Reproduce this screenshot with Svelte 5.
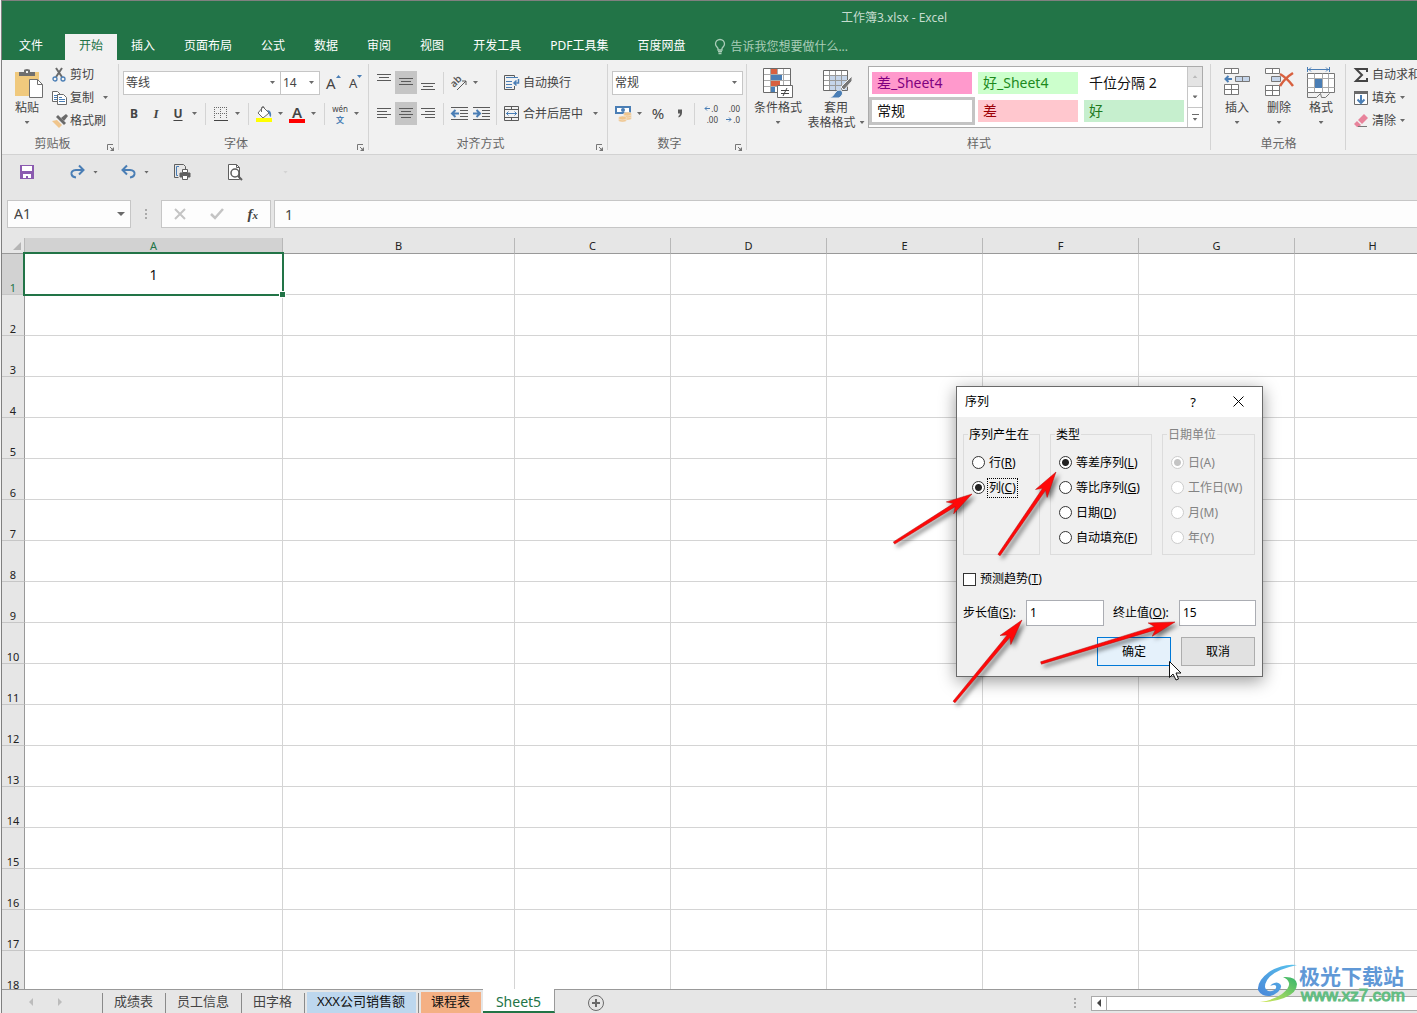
<script>
  const tabs = ['插入', '页面布局', '公式', '数据', '审阅', '视图', '开发工具', 'PDF工具集', '百度网盘'];
  const columns = ['A', 'B', 'C', 'D', 'E', 'F', 'G', 'H'];
  const rows = Array.from({ length: 18 }, (_, i) => i + 1);
  const types = [['等差序列', 'L'], ['等比序列', 'G'], ['日期', 'D'], ['自动填充', 'F']];
  const units = [['日', 'A'], ['工作日', 'W'], ['月', 'M'], ['年', 'Y']];
  const arrows = [
    [894, 543, 972, 494],
    [999, 555, 1056, 472],
    [954, 702, 1022, 620],
    [1041, 663, 1175, 622]
  ];

  function arrowPath([x1, y1, x2, y2]) {
    const len = Math.hypot(x2 - x1, y2 - y1);
    const ux = (x2 - x1) / len;
    const uy = (y2 - y1) / len;
    const at = (d, w) => `${(x2 - ux * d - uy * w).toFixed(1)} ${(y2 - uy * d + ux * w).toFixed(1)}`;
    return `M${at(len, 1.3)}L${at(21, 1.8)}L${at(26, 7)}L${at(0, 0)}L${at(26, -7)}L${at(21, -1.8)}L${at(len, -1.3)}Z`;
  }
</script>

{#snippet lines(rowsData)}
  <svg width="16" height="23" viewBox="0 0 16 23" shape-rendering="crispEdges" aria-hidden="true">
    {#each rowsData as [x, y, w]}<rect {x} {y} width={w} height="1" fill="#5a5a5a" />{/each}
  </svg>
{/snippet}

{#snippet launcher()}
  <button class="launcher" aria-label="更多设置">
    <svg width="8" height="8" viewBox="0 0 8 8" aria-hidden="true">
      <path d="M.5 6V.5H6" fill="none" stroke="#777" /><path d="M3 3l3 3" stroke="#777" /><path d="M7 3v4H3z" fill="#777" />
    </svg>
  </button>
{/snippet}

<main class="app">
  <header class="top">
    <div class="title">工作簿3.xlsx - Excel</div>
    <nav class="tabs">
      <button class="tab file">文件</button>
      <button class="tab active">开始</button>
      {#each tabs as t}<button class="tab">{t}</button>{/each}
      <button class="tell">
        <svg width="12" height="16" viewBox="0 0 12 16" fill="none" stroke="#a9cdb8" aria-hidden="true">
          <path d="M4 11V9.500C3.500 8 1.500 7.500 1.500 5a4.500 4.500 0 0 1 9 0C10.500 7.500 8.500 8 8 9.500V11z" stroke-width="1.300" />
          <path d="M4 12.500h4M4.500 14.500h3" stroke-width="1.300" />
        </svg>
        告诉我您想要做什么...
      </button>
    </nav>
  </header>

  <section class="ribbon">
    <div class="group clip">
      <div class="body">
        <button class="big paste">
          <svg width="30" height="32" viewBox="0 0 30 32" aria-hidden="true">
            <path d="M1 4h24v24H1z" fill="#f0c97d" />
            <path d="M5 8V4h5V2.500Q10 1 13 1t3 1.500V4h5v4z" fill="#6f6f6f" /><rect x="12" y="3" width="2" height="2" fill="#f0f0f0" />
            <path d="M15.500 11.500h8l5 5v13h-13z" fill="#fff" stroke="#6f6f6f" /><path d="M23.500 11.500v5h5" fill="none" stroke="#6f6f6f" />
          </svg>
          <span>粘贴</span><i class="caret"></i>
        </button>
        <div class="stack">
          <button class="item">
            <svg width="16" height="16" viewBox="0 0 16 16" fill="none" aria-hidden="true">
              <path d="M4 1l6 9M10 1L4 10" stroke="#6a6a6a" stroke-width="2" />
              <circle cx="3" cy="12" r="2" stroke="#4a7eb5" stroke-width="1.300" /><circle cx="11" cy="12" r="2" stroke="#4a7eb5" stroke-width="1.300" />
            </svg>剪切
          </button>
          <button class="item">
            <svg width="16" height="16" viewBox="0 0 16 16" fill="#fff" stroke="#6a6a6a" aria-hidden="true">
              <path d="M.5 1.500h5l3 3v7h-8z" /><path d="M2 5.500h3M2 7.500h3M2 9.500h3" stroke="#4a7eb5" />
              <path d="M5.500 4.500h6l3 3v7h-9z" /><path d="M7 9.500h6M7 11.500h6M7 7.500h3" stroke="#4a7eb5" />
            </svg>复制<i class="caret"></i>
          </button>
          <button class="item">
            <svg width="16" height="16" viewBox="0 0 16 16" aria-hidden="true">
              <path d="M0 8l5-1 5 5-3 3z" fill="#f0c58c" /><path d="M4 4l2-2 8 8-2 2z" fill="#6a6a6a" /><path d="M9 5l5-4 2 2-4 5z" fill="#6a6a6a" />
            </svg>格式刷
          </button>
        </div>
      </div>
      <footer>剪贴板{@render launcher()}</footer>
    </div>

    <div class="group font">
      <div class="body rows">
        <div class="row">
          <span class="combo name"><select aria-label="字体"><option>等线</option></select><i class="caret"></i></span>
          <span class="combo size"><select aria-label="字号"><option>14</option></select><i class="caret"></i></span>
          <button class="grow" aria-label="增大字号">
            <span class="letter">A</span><svg width="5" height="3" viewBox="0 0 5 3" aria-hidden="true"><path d="M0 3h5L2.500 0z" fill="#4a7eb5" /></svg>
          </button>
          <button class="grow small" aria-label="减小字号">
            <span class="letter">A</span><svg width="5" height="3" viewBox="0 0 5 3" aria-hidden="true"><path d="M0 0h5L2.500 3z" fill="#4a7eb5" /></svg>
          </button>
        </div>
        <div class="row">
          <button class="tool bold">B</button>
          <button class="tool italic">I</button>
          <button class="tool under">U</button>
          <button class="drop" aria-label="下划线选项"><i class="caret"></i></button>
          <i class="vs"></i>
          <button class="tool" aria-label="边框">
            <svg width="14" height="14" viewBox="0 0 14 14" fill="none" stroke="#6a6a6a" shape-rendering="crispEdges" aria-hidden="true">
              <path d="M0 .5h14M0 6.500h14M.5 0v12M6.500 0v12M12.500 0v12" stroke-dasharray="1 1" /><path d="M0 13h14" stroke="#444" />
            </svg>
          </button>
          <button class="drop" aria-label="边框选项"><i class="caret"></i></button>
          <i class="vs"></i>
          <button class="tool" aria-label="填充颜色">
            <svg width="18" height="16" viewBox="0 0 18 16" aria-hidden="true">
              <path d="M8 1l6 6-6 5-5-5z" fill="#fff" stroke="#6a6a6a" /><path d="M6.500 6V1.500Q8 -.5 9.500 1.500" fill="none" stroke="#6a6a6a" />
              <path d="M12 4q5 0 4 7-2-1-2-4z" fill="#4a7eb5" /><path d="M1 12h16v4H1z" fill="#ff0" />
            </svg>
          </button>
          <button class="drop" aria-label="填充颜色选项"><i class="caret"></i></button>
          <button class="tool fontcolor" aria-label="字体颜色"><span>A</span></button>
          <button class="drop" aria-label="字体颜色选项"><i class="caret"></i></button>
          <i class="vs"></i>
          <button class="tool pinyin"><span>wén</span><b>文</b></button>
          <button class="drop" aria-label="拼音选项"><i class="caret"></i></button>
        </div>
      </div>
      <footer>字体{@render launcher()}</footer>
    </div>

    <div class="group align">
      <div class="body">
        <div class="rows">
          <div class="row">
            <button class="tool" aria-label="顶端对齐">{@render lines([[1, 3, 14], [3, 6, 10], [1, 9, 14]])}</button>
            <button class="tool on" aria-label="垂直居中">{@render lines([[1, 7, 14], [3, 10, 10], [1, 13, 14]])}</button>
            <button class="tool" aria-label="底端对齐">{@render lines([[1, 12, 14], [3, 15, 10], [1, 18, 14]])}</button>
            <i class="vs"></i>
            <button class="tool" aria-label="方向">
              <svg width="18" height="18" viewBox="0 0 18 18" aria-hidden="true">
                <text x="1" y="11" transform="rotate(-45 6 9)" font-size="10" font-weight="600" fill="#5a5a5a">ab</text>
                <path d="M7 16L16 7M16 11V7h-4" fill="none" stroke="#5a5a5a" />
              </svg>
            </button>
            <button class="drop" aria-label="方向选项"><i class="caret"></i></button>
          </div>
          <div class="row">
            <button class="tool" aria-label="左对齐">{@render lines([[1, 6, 14], [1, 9, 10], [1, 12, 14], [1, 15, 10]])}</button>
            <button class="tool on" aria-label="居中">{@render lines([[1, 6, 14], [3, 9, 10], [1, 12, 14], [3, 15, 10]])}</button>
            <button class="tool" aria-label="右对齐">{@render lines([[1, 6, 14], [5, 9, 10], [1, 12, 14], [5, 15, 10]])}</button>
            <i class="vs"></i>
            <button class="tool" aria-label="减少缩进">
              <svg width="17" height="13" viewBox="0 0 17 13" aria-hidden="true"><path d="M0 .5h17M9 3.500h8M9 6.500h8M9 9.500h8M0 12.500h17" stroke="#5a5a5a" /><path d="M1 6.500h7M4.500 3L1 6.500 4.500 10" fill="none" stroke="#4a7eb5" stroke-width="2" /></svg>
            </button>
            <button class="tool" aria-label="增加缩进">
              <svg width="17" height="13" viewBox="0 0 17 13" aria-hidden="true"><path d="M0 .5h17M9 3.500h8M9 6.500h8M9 9.500h8M0 12.500h17" stroke="#5a5a5a" /><path d="M0 6.500h7M3.500 3L7 6.500 3.500 10" fill="none" stroke="#4a7eb5" stroke-width="2" /></svg>
            </button>
          </div>
        </div>
        <i class="vs tall"></i>
        <div class="rows">
          <button class="row wide">
            <svg width="16" height="15" viewBox="0 0 16 15" fill="none" stroke="#5a5a5a" aria-hidden="true">
              <path d="M.5 .5h10v2M10.500 11v3.500H.5V.5" /><path d="M2 2.500h12M2 6.500h6M2 9.500h6M2 12.500h6" stroke="#4a7eb5" /><path d="M14.500 4v4H10M12.500 5.500L10 8l2.500 2.500" stroke="#4a7eb5" stroke-width="1.500" />
            </svg>自动换行
          </button>
          <button class="row wide">
            <svg width="16" height="15" viewBox="0 0 16 15" fill="none" stroke="#5a5a5a" aria-hidden="true">
              <path d="M.5 .5h14v14H.5zM.5 3.500h14M.5 11.500h14M7.500 .5v3M7.500 11.500v3" /><path d="M2 7.500h11M4.500 5.500l-2 2 2 2M10.500 5.500l2 2-2 2" stroke="#4a7eb5" />
            </svg>合并后居中<i class="caret"></i>
          </button>
        </div>
      </div>
      <footer>对齐方式{@render launcher()}</footer>
    </div>

    <div class="group number">
      <div class="body rows">
        <div class="row"><span class="combo format"><select aria-label="数字格式"><option>常规</option></select><i class="caret"></i></span></div>
        <div class="row">
          <button class="tool" aria-label="会计数字格式">
            <svg width="18" height="16" viewBox="0 0 18 16" aria-hidden="true">
              <path d="M1 0h16v8H1z" fill="#4a7eb5" /><path d="M3 2h12v4H3z" fill="#fff" /><circle cx="9" cy="4" r="2" fill="#4a7eb5" />
              <g fill="#f0c58c" stroke="#f0f0f0" stroke-width=".5"><ellipse cx="13.500" cy="12" rx="4" ry="2" /><ellipse cx="13.500" cy="10" rx="4" ry="2" /><ellipse cx="13.500" cy="8" rx="4" ry="2" /><ellipse cx="8.500" cy="14" rx="4" ry="2" /><ellipse cx="8.500" cy="12" rx="4" ry="2" /></g>
            </svg>
          </button>
          <button class="drop" aria-label="会计格式选项"><i class="caret"></i></button>
          <button class="tool percent">%</button>
          <button class="tool comma" aria-label="千位分隔样式"><svg width="6" height="9" viewBox="0 0 6 9" aria-hidden="true"><path d="M1 .5h4v3Q5 7 1.500 8.500V7Q3 6 3 4.500H1z" fill="#5a5a5a" /></svg></button>
          <i class="vs"></i>
          <button class="tool dec" aria-label="增加小数位数">
            <span><svg width="6" height="5" viewBox="0 0 6 5" aria-hidden="true"><path d="M6 2.500H1M3 .5l-2 2 2 2" fill="none" stroke="#4a7eb5" /></svg>.0</span><span>.00</span>
          </button>
          <button class="tool dec" aria-label="减少小数位数">
            <span>.00</span><span><svg width="6" height="5" viewBox="0 0 6 5" aria-hidden="true"><path d="M0 2.500h5M3 .5l2 2-2 2" fill="none" stroke="#4a7eb5" /></svg>.0</span>
          </button>
        </div>
      </div>
      <footer>数字{@render launcher()}</footer>
    </div>

    <div class="group styles">
      <div class="body">
        <button class="big">
          <svg width="30" height="32" viewBox="0 0 30 32" aria-hidden="true">
            <path d="M.5 .5h27v24H.5z" fill="#fff" /><path d="M8 1h6v6H8zM8 13h9v6H8z" fill="#d8603f" /><path d="M8 7h11v6H8zM8 19h4v6H8z" fill="#4a7eb5" />
            <path d="M.5 6.500h27M.5 12.500h27M.5 18.500h27M7.500 1v24M14.500 1v6M20.500 1v24" stroke="#aaa" /><path d="M.5 .5h27v24H.5z" fill="none" stroke="#6a6a6a" />
            <path d="M14.500 17.500h15v12h-15z" fill="#fff" stroke="#6a6a6a" /><path d="M18 22.500h8M18 25.500h8M24 20l-4 8" stroke="#444" />
          </svg>
          <span>条件格式</span><i class="caret"></i>
        </button>
        <button class="big">
          <svg width="30" height="32" viewBox="0 0 30 32" aria-hidden="true">
            <path d="M.5 2.500h24v20H.5z" fill="#fff" /><path d="M7 7h17v15H7z" fill="#c5d5ea" />
            <path d="M.5 7.500h24M.5 12.500h24M.5 17.500h24M6.500 2v20M12.500 2v20M18.500 2v20" stroke="#999" /><path d="M.5 2.500h24v20H.5z" fill="none" stroke="#6a6a6a" />
            <path d="M18 19L29 8v5l-8 9z" fill="#777" stroke="#f0f0f0" /><path d="M6 30q4-1 6-5t6-3q4 4-2 8z" fill="#4a7eb5" stroke="#f0f0f0" />
          </svg>
          <span>套用</span><span class="inline">表格格式<i class="caret"></i></span>
        </button>
        <div class="gallery">
          <div class="swatches">
            <button class="sw pink">差_Sheet4</button><button class="sw lime">好_Sheet4</button><button class="sw">千位分隔 2</button>
            <button class="sw chosen">常规</button><button class="sw rose">差</button><button class="sw mint">好</button>
          </div>
          <div class="scroller">
            <button disabled aria-label="上一行"><i class="caret up"></i></button>
            <button aria-label="下一行"><i class="caret"></i></button>
            <button class="more" aria-label="全部样式"><i class="caret"></i></button>
          </div>
        </div>
      </div>
      <footer>样式</footer>
    </div>

    <div class="group cells">
      <div class="body">
        <button class="big">
          <svg width="28" height="32" viewBox="0 0 28 32" fill="#fff" stroke="#777" aria-hidden="true">
            <path d="M1.500 1.500h14v5h-14zM8.500 1.500v5M1.500 17.500h14v10h-14zM8.500 17.500v10M1.500 22.500h14" /><path d="M12.500 9.500h14v5h-14zM19.500 9.500v5" fill="#c5d5ea" /><path d="M9 12H3M5.500 9L2.500 12l3 3" fill="none" stroke="#4a7eb5" stroke-width="2" />
          </svg>
          <span>插入</span><i class="caret"></i>
        </button>
        <button class="big">
          <svg width="30" height="32" viewBox="0 0 30 32" fill="#fff" stroke="#777" aria-hidden="true">
            <path d="M1.500 1.500h14v5h-14zM8.500 1.500v5M1.500 18.500h14v10h-14zM8.500 18.500v10M1.500 23.500h14" /><path d="M7.500 9.500h9v5h-9z" fill="#c5d5ea" /><path d="M16 7q7 4 13 12M29 6q-8 5-13 13" fill="none" stroke="#d8603f" stroke-width="2.500" />
          </svg>
          <span>删除</span><i class="caret"></i>
        </button>
        <button class="big">
          <svg width="28" height="32" viewBox="0 0 28 32" fill="#fff" stroke="#777" aria-hidden="true">
            <path d="M.5 6.500h27v19H.5z" /><path d="M.5 11.500h27M.5 20.500h27M7.500 6.500v19M15.500 6.500v19M21.500 6.500v19" stroke="#aaa" /><path d="M8 12h7v9H8z" fill="#4a7eb5" stroke="none" />
            <path d="M.5 25.500v5h9l4-4 1 4h4l4-4" fill="none" /><path d="M.5 0v5M22.500 0v5M1 2.500h21M4 .5l-2 2 2 2M19 .5l2 2-2 2" fill="none" stroke="#4a7eb5" />
          </svg>
          <span>格式</span><i class="caret"></i>
        </button>
      </div>
      <footer>单元格</footer>
    </div>

    <div class="group edit">
      <div class="body">
        <div class="stack">
          <button class="item"><svg width="16" height="16" viewBox="0 0 16 16" fill="none" stroke="#444" stroke-width="2" aria-hidden="true"><path d="M14 5V2H3l6 6-6 6h11v-3" /></svg>自动求和</button>
          <button class="item"><svg width="16" height="16" viewBox="0 0 16 16" fill="#fff" stroke="#6a6a6a" aria-hidden="true"><path d="M1.500 1.500h13v13h-13z" /><path d="M1 1h14v3H1z" fill="#6a6a6a" stroke="none" /><path d="M8 5v8M4.500 9.500L8 13l3.500-3.500" fill="none" stroke="#4a7eb5" stroke-width="2" /></svg>填充<i class="caret"></i></button>
          <button class="item"><svg width="16" height="16" viewBox="0 0 16 16" aria-hidden="true"><path d="M5 7l6-6 4 4-6 6z" fill="#e8839b" /><path d="M4 8L1 11l3 3h2l2-2z" fill="#e8839b" /><path d="M5 13.500h9" stroke="#777" /></svg>清除<i class="caret"></i></button>
        </div>
      </div>
    </div>
  </section>

  <section class="quick">
    <button class="q" aria-label="保存"><svg width="14" height="14" viewBox="0 0 14 14" aria-hidden="true"><path d="M0 0h14v14H0z" fill="#8b5bb0" /><path d="M2 1h10v5H2zM3 9h8v4H8v-2H6v2H3z" fill="#fff" /></svg></button>
    <button class="q" aria-label="恢复"><svg width="15" height="14" viewBox="0 0 15 14" fill="none" stroke="#4a7eb5" stroke-width="2" aria-hidden="true"><path d="M13 5H6Q1 5.500 1.500 9 2 12 6 12.500M9 .5L13.500 5 9 9.500" /></svg><i class="caret"></i></button>
    <button class="q" aria-label="撤消"><svg width="15" height="14" viewBox="0 0 15 14" fill="none" stroke="#4a7eb5" stroke-width="2" aria-hidden="true"><path d="M2 5h7q5 .5 4.500 4-.5 3-4.500 3.500M6 .5L1.500 5 6 9.500" /></svg><i class="caret"></i></button>
    <button class="q" aria-label="打印预览和打印"><svg width="17" height="17" viewBox="0 0 17 17" fill="#fff" stroke="#5f5f5f" aria-hidden="true"><path d="M.5 13.500V.5h9l2 2v4M.5 13.500h4" fill="none" /><path d="M5 2.500H2.500v9H4" fill="none" stroke="#4a7eb5" /><path d="M8.500 5.500h5v3h-5z" /><path d="M6 9h10v4H6z" fill="#5f5f5f" /><path d="M8.500 11.500h5v4h-5z" /></svg></button>
    <button class="q" aria-label="打印预览"><svg width="15" height="17" viewBox="0 0 15 17" fill="#fff" stroke="#5f5f5f" aria-hidden="true"><path d="M.5 .5h8l3 3v12H.5z" /><path d="M8.500 .5v3h3" fill="none" /><circle cx="7" cy="9" r="4" stroke-width="1.500" /><path d="M10 12l4 4" stroke-width="2" /></svg></button>
    <button class="q faint" aria-label="自定义快速访问工具栏"><i class="caret"></i></button>
  </section>

  <section class="formula">
    <div class="namebox"><input aria-label="名称框" value="A1" /><i class="caret"></i></div>
    <svg class="dots" width="2" height="10" viewBox="0 0 2 10" aria-hidden="true"><path d="M0 0h2v2H0zM0 4h2v2H0zM0 8h2v2H0z" fill="#aaa" /></svg>
    <div class="fxbox">
      <button aria-label="取消输入"><svg width="12" height="12" viewBox="0 0 12 12" stroke="#c4c4c4" stroke-width="2" aria-hidden="true"><path d="M1 1l10 10M11 1L1 11" /></svg></button>
      <button aria-label="输入"><svg width="14" height="12" viewBox="0 0 14 12" fill="none" stroke="#c4c4c4" stroke-width="2.500" aria-hidden="true"><path d="M1 6l4 4 8-9" /></svg></button>
      <button class="fx">f<small>x</small></button>
    </div>
    <input class="fbar" aria-label="编辑栏" value="1" />
  </section>

  <section class="sheet">
    <table>
      <colgroup><col class="c0" /><col class="ca" /><col class="cb" />{#each columns.slice(2) as c}<col class="cn" />{/each}</colgroup>
      <thead>
        <tr>
          <th class="corner"><svg width="8" height="8" viewBox="0 0 8 8" aria-hidden="true"><path d="M8 0v8H0z" fill="#b5b5b5" /></svg></th>
          {#each columns as c, i}<th class:hot={i === 0} scope="col">{c}</th>{/each}
        </tr>
      </thead>
      <tbody>
        {#each rows as r}
          <tr>
            <th class:hot={r === 1} scope="row">{r}</th>
            {#each columns as c, i}<td class:sel={r === 1 && i === 0}>{r === 1 && i === 0 ? '1' : ''}</td>{/each}
          </tr>
        {/each}
      </tbody>
    </table>
  </section>

  <footer class="sheets">
    <div class="movers">
      <button aria-label="上一张"><svg width="4" height="8" viewBox="0 0 4 8" aria-hidden="true"><path d="M4 0v8L0 4z" fill="#bcbcbc" /></svg></button>
      <button aria-label="下一张"><svg width="4" height="8" viewBox="0 0 4 8" aria-hidden="true"><path d="M0 0v8l4-4z" fill="#bcbcbc" /></svg></button>
    </div>
    <button class="st">成绩表</button>
    <button class="st">员工信息</button>
    <button class="st">田字格</button>
    <button class="st fill blue"><span>XXX公司销售额</span></button>
    <button class="st fill orange"><span>课程表</span></button>
    <button class="st current">Sheet5</button>
    <button class="plus" aria-label="新工作表"><svg width="16" height="16" viewBox="0 0 16 16" fill="none" stroke="#6a6a6a" aria-hidden="true"><circle cx="8" cy="8" r="7.500" /><path d="M8 4v8M4 8h8" stroke-width="2" /></svg></button>
    <div class="hscroll">
      <svg width="2" height="10" viewBox="0 0 2 10" aria-hidden="true"><path d="M0 0h2v2H0zM0 4h2v2H0zM0 8h2v2H0z" fill="#aaa" /></svg>
      <button aria-label="向左滚动"><svg width="4" height="8" viewBox="0 0 4 8" aria-hidden="true"><path d="M4 0v8L0 4z" fill="#444" /></svg></button>
      <div class="track"></div>
    </div>
  </footer>

  <form class="dialog" aria-label="序列" onsubmit={(e) => e.preventDefault()}>
    <header>
      <span>序列</span>
      <button type="button" class="help">?</button>
      <button type="button" aria-label="关闭"><svg width="11" height="11" viewBox="0 0 11 11" stroke="#000" aria-hidden="true"><path d="M.5 .5l10 10M10.500 .5l-10 10" /></svg></button>
    </header>
    <div class="content">
      <div class="boxes">
        <fieldset>
          <legend>序列产生在</legend>
          <label><input type="radio" name="dir" /><span>行(<u>R</u>)</span></label>
          <label><input type="radio" name="dir" checked /><span class="focus">列(<u>C</u>)</span></label>
        </fieldset>
        <fieldset>
          <legend>类型</legend>
          {#each types as [t, k], i}<label><input type="radio" name="type" checked={i === 0} /><span>{t}(<u>{k}</u>)</span></label>{/each}
        </fieldset>
        <fieldset disabled>
          <legend>日期单位</legend>
          {#each units as [t, k], i}<label><input type="radio" name="unit" checked={i === 0} /><span>{t}({k})</span></label>{/each}
        </fieldset>
      </div>
      <label class="trend"><input type="checkbox" /><span>预测趋势(<u>T</u>)</span></label>
      <div class="values">
        <label for="step">步长值(<u>S</u>):</label><input id="step" value="1" />
        <label for="stop">终止值(<u>O</u>):</label><input id="stop" value="15" />
      </div>
      <div class="actions"><button class="ok">确定</button><button type="button">取消</button></div>
    </div>
  </form>

  <svg class="overlay" aria-hidden="true">
    <g class="arrows">{#each arrows as a}<path d={arrowPath(a)} fill="#ff0808" stroke="#b01010" stroke-width=".5" />{/each}</g>
    <path d="M1169.500 661.500v16l3.500-3.500 3 6 2.500-1-2.500-6h5z" fill="#fff" stroke="#111" />
  </svg>

  <div class="brand">
    <svg width="42" height="42" viewBox="0 0 42 42" aria-hidden="true">
      <defs>
        <linearGradient id="sky" x1="0" y1="1" x2="1" y2="0"><stop offset="0" stop-color="#4a86d8" /><stop offset="1" stop-color="#58c4ee" /></linearGradient>
        <linearGradient id="leaf" x1="0" y1="1" x2="1" y2="0"><stop offset="0" stop-color="#d6e95b" /><stop offset="1" stop-color="#35b56d" /></linearGradient>
      </defs>
      <path d="M40 2Q26 0 12 9 0 18 1 27q2 4 5 5 8 3 15-3 5-5 2-8-3-3-8 0l-2 2q5-2 6 0 1 3-4 5-6 1-7-4Q8 9 40 2z" fill="url(#sky)" />
      <path d="M26 14q13-1 14 7 0 9-13 14-10 4-24 4 14-2 22-8 8-6 7-11-1-4-6-6z" fill="url(#leaf)" />
    </svg>
    <div><strong>极光下载站</strong><span>www.xz7.com</span></div>
  </div>
</main>

<style>
  :global(body) { background: #f4f4f4; }
  .app { position: relative; display: flex; flex-direction: column; height: 100vh; margin-left: 1px; border-left: 1px solid #808080; box-sizing: border-box; overflow: hidden; background: #e6e6e6; color: #444; font: 12px/16px "Noto Sans", "Noto Sans CJK SC", sans-serif; }
  .app *, .app *::after { box-sizing: border-box; }
  button { border: 0; padding: 0; background: none; color: inherit; font: inherit; white-space: nowrap; }
  input, select { font: inherit; color: inherit; border-radius: 0; }
  svg { display: block; flex: none; overflow: visible; }
  i.caret { flex: none; width: 5px; height: 3px; background: #6a6a6a; clip-path: polygon(0 0, 100% 0, 50% 100%); }
  i.caret.up { clip-path: polygon(0 100%, 100% 100%, 50% 0); background: #bbb; }

  .top { flex: none; background: #227447; border-top: 1px solid #808080; color: #fff; }
  .title { height: 33px; line-height: 33px; padding-left: 369px; text-align: center; color: #c5dccf; }
  .tabs { display: flex; gap: 1px; height: 26px; }
  .tab { padding: 0 14px 2px; }
  .tab.file { padding: 0 21px 2px 17px; }
  .tab.active { margin-right: -1px; background: #f1f1f1; color: #227447; }
  .tell { display: flex; align-items: center; gap: 4px; margin-left: 14px; color: #a9cdb8; }

  .ribbon { flex: none; display: flex; height: 95px; background: #f1f1f1; border-bottom: 1px solid #d2d2d2; overflow: hidden; }
  .group { position: relative; flex: none; display: flex; flex-direction: column; }
  .group::after { content: ""; position: absolute; right: 0; top: 4px; bottom: 4px; width: 1px; background: #d4d4d4; }
  .body { flex: 1; display: flex; }
  .group > footer { display: flex; justify-content: center; position: relative; height: 18px; padding-right: 16px; color: #666; }
  .launcher { position: absolute; right: 4px; bottom: 2px; }
  .clip { width: 117px; }
  .font { width: 250px; }
  .align { width: 239px; }
  .number { width: 139px; }
  .styles { width: 464px; }
  .cells { width: 135px; }
  .styles > footer, .cells > footer { padding-right: 0; }
  .big { display: flex; flex-direction: column; align-items: center; padding-top: 8px; }
  .big span { line-height: 15px; }
  .big > .caret { margin-top: 6px; }
  .inline { display: flex; align-items: center; gap: 4px; }
  .paste { width: 50px; }
  .paste svg { margin-left: 4px; }
  .stack { display: flex; flex-direction: column; padding-top: 3px; }
  .item { display: flex; align-items: center; gap: 2px; height: 23px; }
  .item .caret { margin-left: 7px; }
  .edit .item { gap: 3px; }
  .edit .item .caret { margin-left: 1px; }
  .edit .body { padding-left: 7px; }
  .rows { display: flex; flex-direction: column; gap: 8px; padding-top: 11px; }
  .row { display: flex; align-items: center; height: 23px; }
  .font .rows, .number .rows { padding-left: 4px; }
  .font .body, .number .body { padding-left: 4px; }
  .align .body { padding-left: 4px; }
  .combo { display: flex; align-items: center; height: 24px; border: 1px solid #c6c6c6; background: #fff; padding-right: 5px; }
  .combo select { flex: 1; min-width: 0; height: 100%; border: 0; padding: 0 0 0 2px; background: none; appearance: none; }
  .combo.name { width: 158px; }
  .combo.size { width: 40px; margin-left: -1px; }
  .combo.format { width: 131px; }
  .grow { display: flex; width: 17px; margin-left: 6px; }
  .grow .letter { font-size: 15px; }
  .grow.small .letter { font-size: 13px; }
  .tool { display: flex; align-items: center; justify-content: center; width: 22px; height: 23px; }
  .tool.on { background: #c5c5c5; }
  .bold { font-weight: 700; }
  .italic { font: italic 700 13px "Liberation Serif", serif; }
  .under { font-weight: 700; text-decoration: underline; text-underline-offset: 2px; }
  .drop { display: flex; justify-content: center; align-items: center; width: 11px; height: 23px; }
  .vs { flex: none; width: 1px; height: 22px; margin: 0 4px; background: #d4d4d4; }
  .font .vs { margin: 0 4px 0 5px; }
  .vs.tall { height: 55px; margin: 10px 7px 0 0; }
  .fontcolor span { width: 16px; height: 19px; border-bottom: 4px solid #f00; font-weight: 600; font-size: 15px; line-height: 16px; }
  .pinyin { flex-direction: column; font-size: 8px; line-height: 11px; }
  .pinyin b { color: #4a7eb5; line-height: 11px; }
  .align .rows:first-child { width: 123px; }
  .wide { gap: 3px; }
  .wide .caret { margin-left: 7px; }
  .percent { font-size: 15px; padding-bottom: 2px; margin-left: 2px; }
  .comma { margin-right: -1px; padding-bottom: 1px; }
  .dec { flex-direction: column; align-items: flex-end; padding: 0 3px 0 0; font-size: 8px; line-height: 11px; }
  .dec span { display: flex; align-items: center; gap: 1px; }
  .styles .big { width: 62px; }
  .styles .big:nth-child(2) { width: 54px; }
  .styles .big:nth-child(2) svg { margin-left: 4px; }
  .gallery { display: flex; width: 335px; height: 62px; margin: 6px 0 0 5px; border: 1px solid #ababab; background: #fff; }
  .swatches { flex: 1; display: grid; grid-template-columns: repeat(3, 100px); grid-auto-rows: 22px; gap: 6px; padding: 5px 0 0 3px; }
  .sw { padding-left: 5px; text-align: left; font-size: 14px; line-height: 22px; color: #111; }
  .pink { background: #ff99cc; color: #800080; }
  .lime { background: #ccffcc; color: #1c8a1c; }
  .rose { background: #ffc7ce; color: #9c0006; }
  .mint { background: #c6efce; color: #1e7a1e; }
  .chosen { outline: 3px solid #c4c4c4; }
  .scroller { width: 15px; display: flex; flex-direction: column; border-left: 1px solid #c6c6c6; }
  .scroller button { flex: 1; display: flex; flex-direction: column; gap: 3px; align-items: center; justify-content: center; border-bottom: 1px solid #c6c6c6; }
  .scroller button:last-child { border: 0; }
  .scroller button:disabled { background: #e4e4e4; }
  .more::before { content: ""; width: 7px; height: 1px; background: #6a6a6a; }
  .cells .body { padding-left: 5px; }
  .cells .big { width: 42px; }
  .cells .big svg { margin-top: -1px; margin-bottom: 1px; }

  .quick { flex: none; display: flex; align-items: center; height: 34px; padding-left: 18px; margin-bottom: 1px; }
  .q { display: flex; align-items: center; gap: 8px; margin-right: 23px; height: 20px; }
  .q:first-child { margin-right: 36px; }
  .q:nth-child(4) { margin-right: 37px; margin-left: 2px; }
  .q:nth-child(5) { margin-right: 40px; }
  .faint { opacity: .15; }
  .formula { flex: none; display: flex; align-items: center; margin: 10px 0; padding-left: 5px; height: 28px; font-size: 14px; }
  .namebox, .fxbox, .fbar { display: flex; align-items: center; height: 28px; border: 1px solid #c6c6c6; background: #fdfdfd; }
  .namebox { width: 124px; padding-right: 5px; }
  .namebox input { flex: 1; min-width: 0; border: 0; padding: 0 6px; background: none; }
  .namebox .caret { width: 8px; height: 4px; }
  .dots { margin: 0 14px; }
  .fxbox { width: 110px; justify-content: space-around; }
  .fx { font: italic 700 15px "Liberation Serif", serif; }
  .fx small { font-size: 11px; }
  .fbar { flex: 1; min-width: 0; margin-left: 3px; border-right: 0; padding: 0 10px; }

  .sheet { flex: 1; min-height: 0; overflow: hidden; }
  table { table-layout: fixed; width: 1449px; border-collapse: separate; border-spacing: 0; background: #fff; }
  .c0 { width: 23px; }
  .ca { width: 258px; }
  .cb { width: 232px; }
  .cn { width: 156px; }
  th { padding: 0; font-weight: 400; font-size: 11px; line-height: 13px; color: #222; background: #e6e6e6; }
  thead th { height: 16px; border-right: 1px solid #b8b8b8; border-bottom: 1px solid #999; }
  .corner svg { margin-left: 11px; }
  tbody th { height: 41px; border-right: 1px solid #999; border-bottom: 1px solid #c6c6c6; vertical-align: bottom; }
  th.hot { background: #d2d2d2; color: #227447; }
  td { padding: 2px 0 0; border-right: 1px solid #d4d4d4; border-bottom: 1px solid #d4d4d4; text-align: center; color: #111; font-size: 14px; }
  td.sel { position: relative; z-index: 1; }
  td.sel::before { content: ""; position: absolute; inset: -2px; border: 2px solid #227447; box-sizing: border-box; }
  td.sel::after { content: ""; position: absolute; right: -4px; bottom: -4px; width: 7px; height: 7px; border: 1px solid #fff; background: #227447; }

  .sheets { flex: none; display: flex; height: 24px; border-top: 1px solid #999; font-size: 13px; line-height: 22px; }
  .movers { display: flex; align-items: center; gap: 25px; width: 100px; padding-left: 27px; }
  .st { position: relative; padding: 0 12px 1px; }
  .st:not(.current)::before { content: ""; position: absolute; left: 0; top: 3px; bottom: 0; width: 1px; background: #8a8a8a; }
  .fill { padding: 2px 2px 0 3px; color: #111; }
  .fill span { display: block; padding: 0 11px 0 10px; line-height: 19px; height: 21px; }
  .blue span { background: #bdd7ee; }
  .orange span { background: #f4b084; }
  .current { margin: -1px 0 0; padding: 2px 13px 0; background: #fff; color: #227447; font-size: 14px; border-right: 1px solid #999; border-bottom: 2px solid #227447; }
  .plus { margin-left: 33px; padding-top: 3px; }
  .hscroll { flex: none; display: flex; align-items: center; width: 343px; margin-left: auto; padding-top: 3px; }
  .hscroll button { display: flex; align-items: center; justify-content: center; width: 16px; height: 15px; margin-left: 15px; border: 1px solid #aaa; background: #fff; }
  .track { flex: 1; height: 15px; border: solid #aaa; border-width: 1px 0; background: #fff; }

  .dialog { position: absolute; left: 954px; top: 386px; width: 307px; border: 1px solid #6a6a6a; background: #f0f0f0; color: #000; box-shadow: 0 4px 16px rgba(0, 0, 0, .4); }
  .dialog header { display: flex; align-items: center; height: 30px; padding: 0 18px 0 8px; background: #fff; }
  .dialog header span { flex: 1; }
  .dialog header svg { margin-bottom: 2px; }
  .help { margin-right: 37px; font-size: 13px; }
  .content { padding: 9px 7px 10px 6px; }
  .boxes { display: grid; grid-template-columns: 77px 102px 93px; gap: 10px; }
  fieldset { min-width: 0; height: 129px; margin: 0; padding: 7px 0 0 7px; border: 1px solid #dcdcdc; }
  legend { margin-left: -3px; padding: 0 1px; line-height: 17px; white-space: nowrap; }
  fieldset:disabled { color: #838383; }
  fieldset label { display: flex; align-items: center; gap: 4px; height: 25px; white-space: nowrap; }
  input[type="radio"] { appearance: none; flex: none; width: 13px; height: 13px; margin: 0 0 0 1px; border: 1px solid #333; border-radius: 50%; background: #fff; }
  input[type="radio"]:checked { background: radial-gradient(circle, #222 3px, #fff 4px); }
  input[type="radio"]:disabled { border-color: #ccc; }
  input[type="radio"]:disabled:checked { background: radial-gradient(circle, #c4c4c4 3px, #fff 4px); }
  .focus { outline: 1px dotted #000; outline-offset: 1px; }
  .trend { display: flex; align-items: center; gap: 4px; margin-top: 16px; }
  input[type="checkbox"] { appearance: none; width: 13px; height: 13px; margin: 0; border: 1px solid #333; background: #fff; }
  .values { display: grid; grid-template-columns: 63px 78px 75px 77px; align-items: center; margin-top: 13px; white-space: nowrap; }
  .values label:nth-of-type(2) { padding-left: 9px; }
  .values input { width: 100%; height: 26px; padding: 0 3px 2px; border: 1px solid #abadb3; background: #fff; }
  .actions { display: flex; justify-content: flex-end; gap: 10px; margin-top: 11px; }
  .actions button { width: 74px; height: 29px; border: 1px solid #adadad; background: #e1e1e1; }
  .actions .ok { border-color: #0078d7; background: #e5f1fb; }

  .overlay { position: absolute; left: -2px; top: 0; width: 100%; height: 100%; pointer-events: none; }
  .arrows { filter: drop-shadow(3px 3px 2px rgba(0, 0, 0, .5)); }
  .brand { position: absolute; right: 12px; bottom: 8px; display: flex; align-items: center; }
  .brand div { display: flex; flex-direction: column; }
  .brand strong { font: 700 21px/24px "Noto Sans CJK SC", sans-serif; color: #6098d6; }
  .brand span { padding-left: 2px; font: 17px/18px "Liberation Sans", sans-serif; color: #62bd82; -webkit-text-stroke: 1px #62bd82; }
</style>
